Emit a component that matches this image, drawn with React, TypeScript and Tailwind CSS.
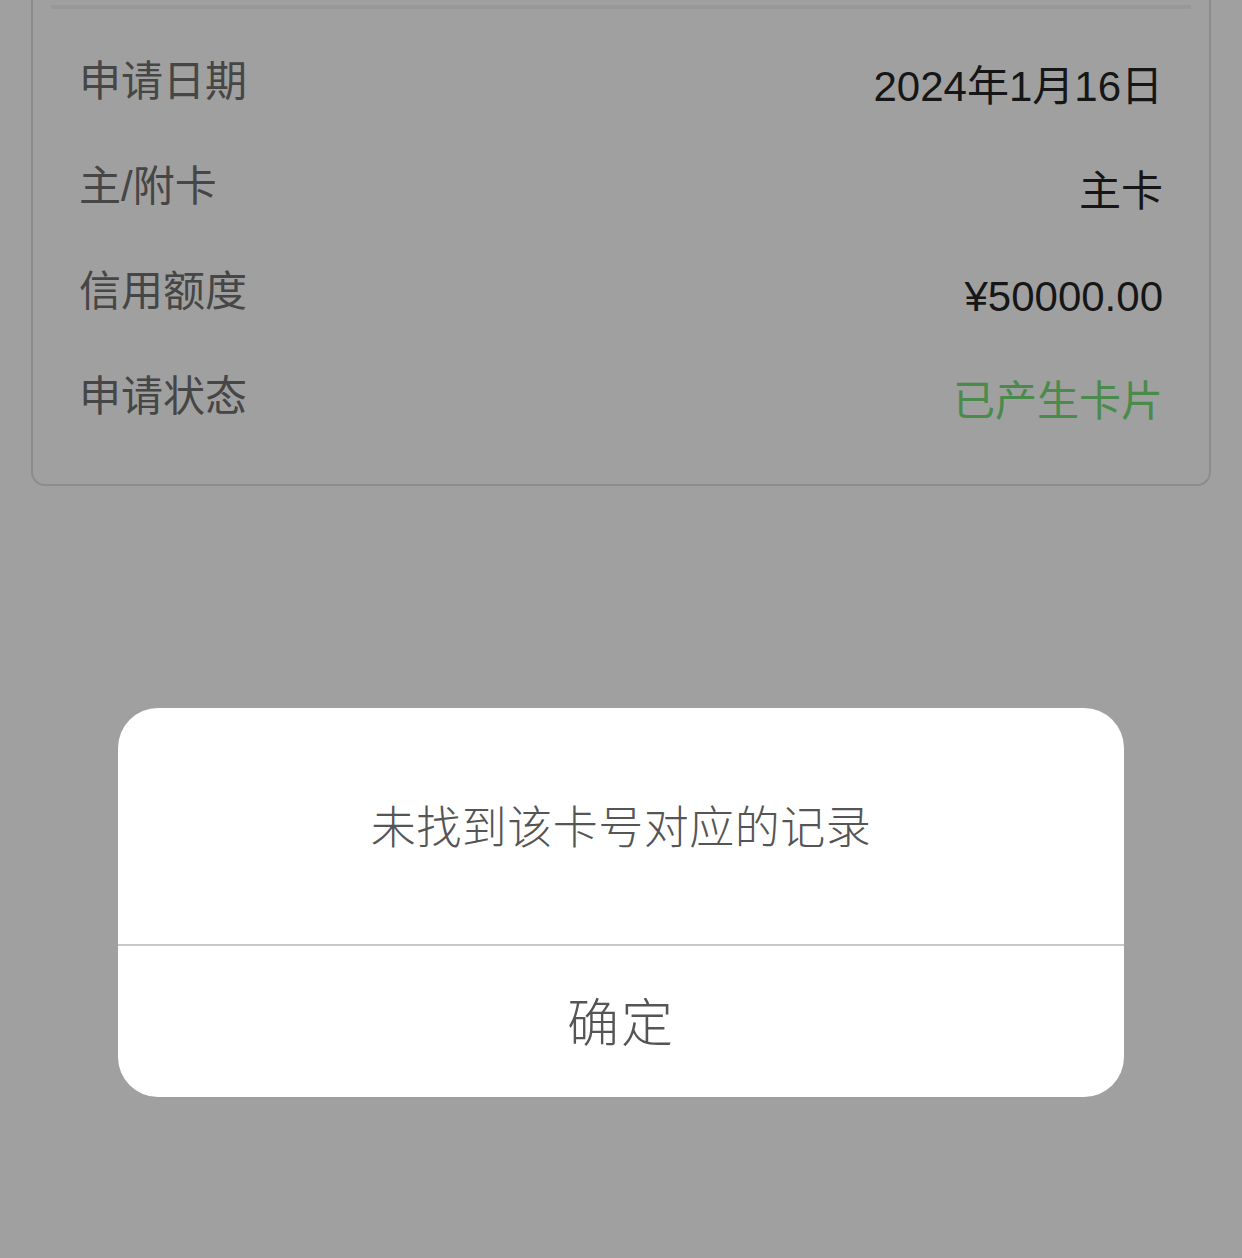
const rows = [
  { label: "申请日期", value: "2024年1月16日", green: false },
  { label: "主/附卡", value: "主卡", green: false },
  { label: "信用额度", value: "¥50000.00", green: false },
  { label: "申请状态", value: "已产生卡片", green: true },
];

export default function App() {
  return (
    <div
      className="relative w-[1242px] h-[1258px] overflow-hidden bg-[#a0a0a0]"
      style={{ fontFamily: '"Liberation Sans", "Noto Sans CJK SC", sans-serif' }}
    >
      {/* card behind the mask */}
      <div className="mx-[31px] -mt-[20px] rounded-b-[14px] border-2 border-t-0 border-[#8c8c8c] pl-[46px] pr-[46px] pt-[20px] pb-[8px]">
        <div className="mx-[-28px] h-[4px] mt-[5px] bg-[#989898]" />
        <div className="flex flex-col pt-[47px]">
          {rows.map((r) => (
            <div key={r.label} className="flex h-[105px] items-start justify-between">
              <span className="text-[42px] leading-[52px] text-[#464646]">{r.label}</span>
              <span
                className={
                  "mt-[5px] text-[42px] leading-[52px] " +
                  (r.green ? "text-[#4a8a4a]" : "text-[#161616]")
                }
              >
                {r.value}
              </span>
            </div>
          ))}
        </div>
      </div>

      {/* dialog */}
      <div className="absolute inset-0 px-[118px] pt-[708px]">
        <div className="flex h-[389px] flex-col overflow-hidden rounded-[40px] bg-white">
          <div className="flex h-[238px] items-center justify-center border-b-2 border-[#c8c8c8] pt-[6px]">
            <span className="text-[45px] font-light tracking-[0.5px] text-[#555555]">
              未找到该卡号对应的记录
            </span>
          </div>
          <div className="flex flex-1 items-center justify-center pt-[4px]">
            <span className="text-[52px] font-light tracking-[2px] text-[#555555]">确定</span>
          </div>
        </div>
      </div>
    </div>
  );
}
